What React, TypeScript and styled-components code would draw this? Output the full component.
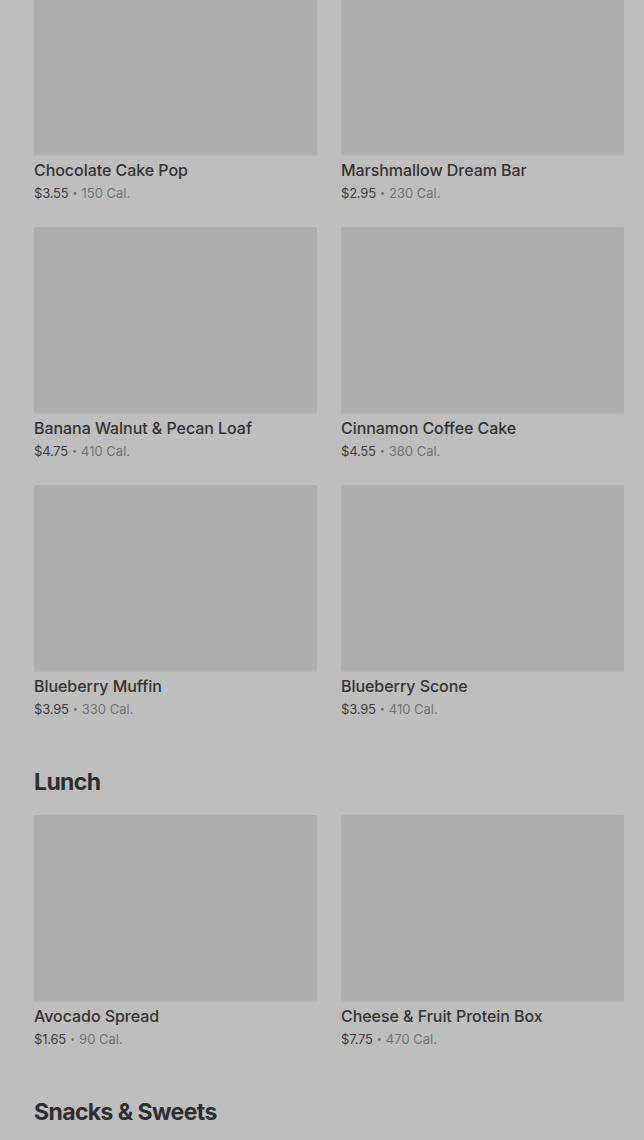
import styled, { createGlobalStyle } from 'styled-components'

interface Item {
  name: string;
  price: string;
  cal: string;
}

const sections: { title?: string; items: Item[] }[] = [
  {
    items: [
      { name: 'Chocolate Cake Pop', price: '$3.55', cal: '150 Cal.' },
      { name: 'Marshmallow Dream Bar', price: '$2.95', cal: '230 Cal.' },
      { name: 'Banana Walnut & Pecan Loaf', price: '$4.75', cal: '410 Cal.' },
      { name: 'Cinnamon Coffee Cake', price: '$4.55', cal: '380 Cal.' },
      { name: 'Blueberry Muffin', price: '$3.95', cal: '330 Cal.' },
      { name: 'Blueberry Scone', price: '$3.95', cal: '410 Cal.' },
    ],
  },
  {
    title: 'Lunch',
    items: [
      { name: 'Avocado Spread', price: '$1.65', cal: '90 Cal.' },
      { name: 'Cheese & Fruit Protein Box', price: '$7.75', cal: '470 Cal.' },
    ],
  },
  { title: 'Snacks & Sweets', items: [] },
]

export default function App() {
  return (
    <>
      <GlobalStyle />
      <Page>
        {sections.map((section, i) => (
          <Section key={i}>
            {section.title && <SectionTitle>{section.title}</SectionTitle>}
            {section.items.length > 0 && (
              <Grid>
                {section.items.map((item) => (
                  <Card key={item.name}>
                    <Thumb />
                    <ItemName>{item.name}</ItemName>
                    <Meta>
                      <Price>{item.price}</Price>
                      <Dot>•</Dot>
                      <Cal>{item.cal}</Cal>
                    </Meta>
                  </Card>
                ))}
              </Grid>
            )}
          </Section>
        ))}
      </Page>
    </>
  )
}

// styles
const GlobalStyle = createGlobalStyle`
  html, body {
    margin: 0;
    padding: 0;
    background: #bebebe;
    overflow: hidden;
  }
  body {
    font-family: Inter, "Noto Sans", sans-serif;
    color: #2f2f2f;
  }
`

const Page = styled.main`
  margin-top: -31px;
  padding: 0 20px 0 34px;
  display: flex;
  flex-direction: column;
  gap: 48px;
`

const Section = styled.section`
  display: flex;
  flex-direction: column;
`

const SectionTitle = styled.h2`
  margin: 0 0 17px;
  font-size: 23px;
  line-height: 32px;
  font-weight: 700;
  letter-spacing: -0.6px;
  color: #2e2e2e;
`

const Grid = styled.div`
  display: grid;
  grid-template-columns: 1fr 1fr;
  column-gap: 24px;
  row-gap: 25px;
`

const Card = styled.div`
  display: flex;
  flex-direction: column;
`

const Thumb = styled.div`
  height: 187px;
  background: #adadad;
  border-radius: 2px;
  box-shadow: inset 0 -2px 0 #b3b3b3;
`

const ItemName = styled.div`
  margin-top: 4px;
  height: 20px;
  font-size: 16px;
  line-height: 20px;
  font-weight: 500;
  letter-spacing: -0.05px;
  color: #333333;
`

const Meta = styled.div`
  margin-top: 4px;
  height: 18px;
  font-size: 13px;
  line-height: 18px;
  display: flex;
  gap: 4px;
  align-items: center;
`

const Price = styled.span`
  color: #3c3c3c;
  letter-spacing: -0.2px;
`

const Dot = styled.span`
  color: #6f6f6f;
  font-size: 9px;
  line-height: 18px;
`

const Cal = styled.span`
  color: #737373;
`
